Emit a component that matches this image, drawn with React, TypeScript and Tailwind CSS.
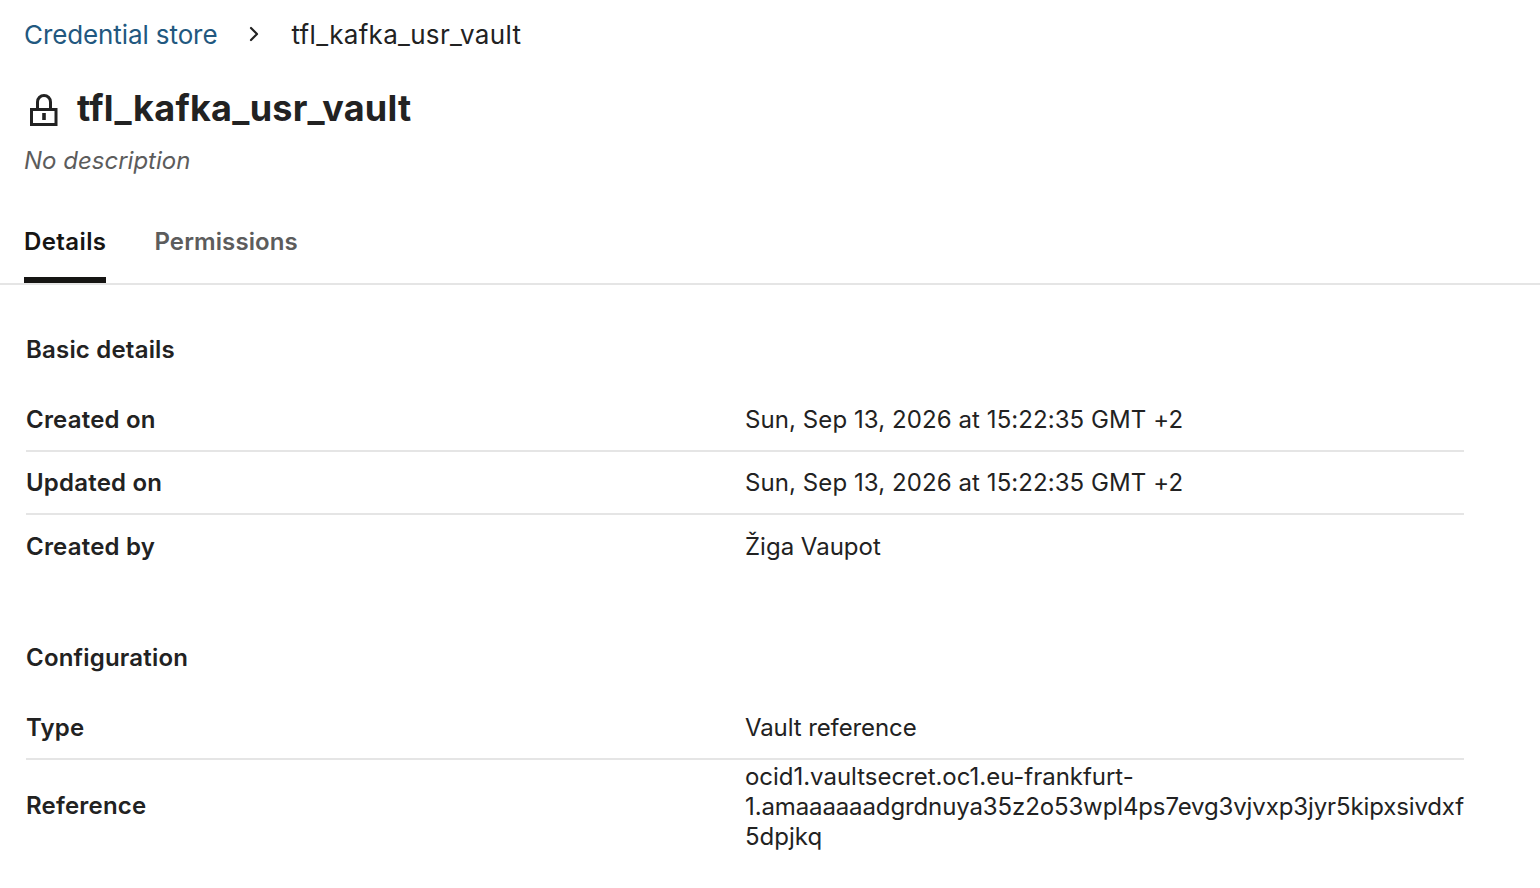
import { ChevronRight } from 'lucide-react';

const basicRows = [
  { label: 'Created on', value: <span className="tracking-[0.08px]">Sun, Sep 13, 2026 at 15:22:35 GMT +2</span> },
  { label: 'Updated on', value: <span className="tracking-[0.08px]">Sun, Sep 13, 2026 at 15:22:35 GMT +2</span> },
  { label: 'Created by', value: <span>Žiga Vaupot</span> },
];

const configRows = [
  { label: 'Type', value: <span className="tracking-[-0.1px]">Vault reference</span> },
  {
    label: 'Reference',
    value: (
      <div className="pt-[2px] whitespace-nowrap">
        <div className="tracking-[-0.03px]">ocid1.vaultsecret.oc1.eu-frankfurt-</div>
        <div className="tracking-[-0.12px]">1.amaaaaaadgrdnuya35z2o53wpl4ps7evg3vjvxp3jyr5kipxsivdxf</div>
        <div>5dpjkq</div>
      </div>
    ),
  },
];

const Row = ({ label, value, last }: { label: string; value: React.ReactNode; last?: boolean }) => (
  <div className={`grid grid-cols-2 items-center min-h-[63px] ${last ? '' : 'border-b-2 border-[#e5e5e5]'}`}>
    <div className="text-[24px] leading-[30px] font-semibold tracking-[0.2px] text-[#222]">{label}</div>
    <div className="text-[24px] leading-[30px] text-[#222]">{value}</div>
  </div>
);

export default function App() {
  return (
    <div className="min-h-[888px] bg-white font-['Inter',sans-serif] overflow-hidden">
      {/* Breadcrumb */}
      <div className="flex items-center h-[68px] px-6 text-[26px]">
        <span className="text-[#22587f] tracking-[-0.1px]">Credential store</span>
        <ChevronRight className="w-6 h-6 ml-[25px] mr-[25px] text-[#222]" strokeWidth={2.2} />
        <span className="text-[#222] tracking-[0.3px]">tfl_kafka_usr_vault</span>
      </div>

      {/* Title */}
      <div className="flex items-center gap-[17px] px-6 h-[70px] mt-[5px]">
        <svg width="36" height="36" viewBox="0 0 36 36" fill="none" stroke="#222" strokeWidth="3" className="mt-[2px]">
          <rect x="7.5" y="18.5" width="24.5" height="15" />
          <path d="M13.5 18V11a6.5 6.5 0 0 1 13 0v7" />
          <rect x="18.2" y="22" width="3.6" height="7" fill="#222" stroke="none" />
        </svg>
        <h1 className="text-[36px] font-bold tracking-[0.25px] text-[#222]">tfl_kafka_usr_vault</h1>
      </div>
      <p className="px-6 text-[24px] leading-[30px] italic text-[#5c5c5c] mt-[3px]">No description</p>

      {/* Tabs */}
      <div className="flex gap-12 px-6 mt-[28px] border-b-2 border-[#e5e5e5] h-[81px]">
        <div className="relative text-[24px] font-semibold tracking-[0.4px] text-[#161513] pt-[20px]">
          Details
          <div className="absolute left-0 right-0 bottom-0 h-[6px] bg-[#161513]" />
        </div>
        <div className="text-[24px] font-semibold tracking-[0.1px] text-[#5c5c5c] pt-[20px]">Permissions</div>
      </div>

      {/* Sections */}
      <div className="pl-[26px] pr-[76px]">
        <h2 className="text-[24px] leading-[30px] font-semibold tracking-[0.2px] text-[#222] mt-[50px] mb-[24px]">Basic details</h2>
        {basicRows.map((r, i) => (
          <Row key={r.label} {...r} last={i === basicRows.length - 1} />
        ))}
        <h2 className="text-[24px] leading-[30px] font-semibold tracking-[0.2px] text-[#222] mt-[65px] mb-[24px]">Configuration</h2>
        {configRows.map((r, i) => (
          <Row key={r.label} {...r} last={i === configRows.length - 1} />
        ))}
      </div>
    </div>
  );
}
